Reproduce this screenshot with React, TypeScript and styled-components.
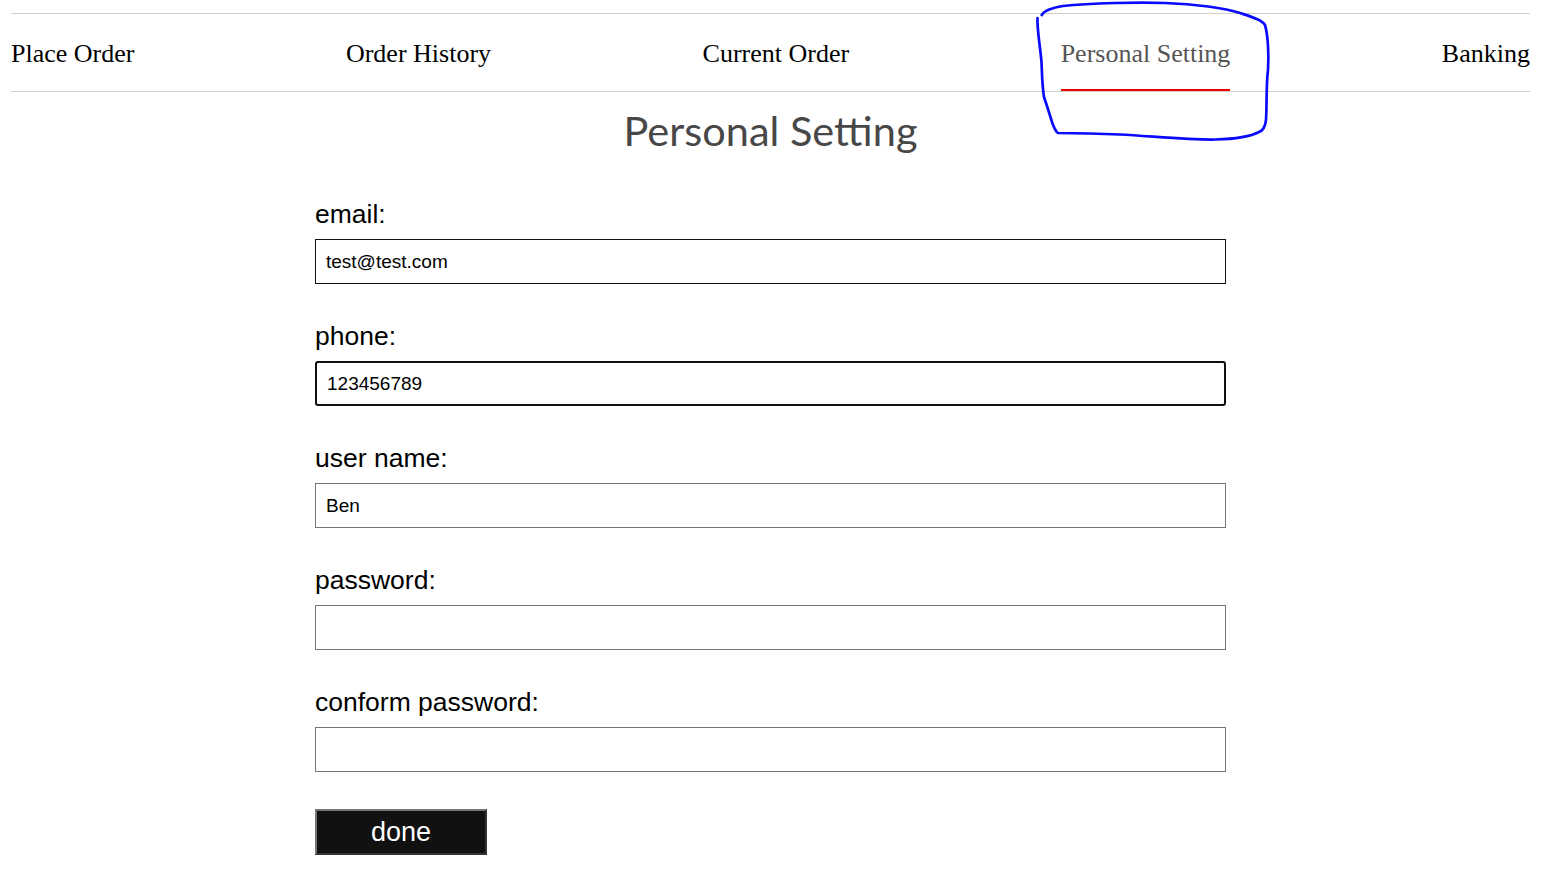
import styled, { createGlobalStyle } from "styled-components";

const GlobalStyle = createGlobalStyle`
  html, body {
    margin: 0;
    padding: 0;
    background: #fff;
  }
  body {
    font-family: "Liberation Sans", Arial, sans-serif;
  }
`;

type Tone = "dark" | "focus" | "plain";

interface Field {
  label: string;
  value: string;
  type: string;
  tone: Tone;
}

const tabs = ["Place Order", "Order History", "Current Order", "Personal Setting", "Banking"];

const fields: Field[] = [
  { label: "email:", value: "test@test.com", type: "email", tone: "dark" },
  { label: "phone:", value: "123456789", type: "tel", tone: "focus" },
  { label: "user name:", value: "Ben", type: "text", tone: "plain" },
  { label: "password:", value: "", type: "password", tone: "plain" },
  { label: "conform password:", value: "", type: "password", tone: "plain" },
];

export default function App() {
  return (
    <>
      <GlobalStyle />
      <Page>
        <Nav>
          {tabs.map((t) => (
            <NavItem key={t} href="#" $active={t === "Personal Setting"}>
              {t}
            </NavItem>
          ))}
        </Nav>

        <Title>Personal Setting</Title>

        <Form onSubmit={(e) => e.preventDefault()}>
          {fields.map((f) => (
            <FieldGroup key={f.label}>
              <Label>
                {f.label}
                <Input type={f.type} defaultValue={f.value} $tone={f.tone} />
              </Label>
            </FieldGroup>
          ))}
          <DoneButton type="submit">done</DoneButton>
        </Form>

        {/* hand-drawn highlight round the active tab */}
        <Scribble viewBox="0 0 1563 160" width="1563" height="160">
          <path
            d="M1041.7 15
               C1044 11, 1050 8, 1063 6
               C1090 3, 1140 2, 1165 3
               C1195 4, 1225 8, 1240 13
               C1252 17, 1262 20, 1265 25
               C1268 35, 1269 55, 1268 70
               C1266 85, 1267 105, 1266 120
               C1265 128, 1263 131, 1259 132
               C1250 137, 1235 139, 1215 139.5
               C1190 140, 1150 136, 1120 134.5
               C1100 133.5, 1075 133, 1058 133
               C1055 131, 1054 128, 1052 122
               C1049 112, 1047 106, 1044 97
               C1042 85, 1042 72, 1041.5 62
               C1040 45, 1037 30, 1037.5 18"
            fill="none"
            stroke="#0a0aff"
            strokeWidth="2.7"
            strokeLinecap="round"
            strokeLinejoin="round"
          />
        </Scribble>
      </Page>
    </>
  );
}

// Estilos
const Page = styled.div`
  position: relative;
  padding: 13px 33px 0 11px;
`;

const Nav = styled.nav`
  display: flex;
  justify-content: space-between;
  height: 79px;
  box-sizing: border-box;
  border-top: 1px solid #cfcfcf;
  border-bottom: 1px solid #cfcfcf;
`;

const NavItem = styled.a<{ $active?: boolean }>`
  display: block;
  height: 77px;
  box-sizing: border-box;
  padding-top: 25px;
  font-family: "Liberation Serif", "Times New Roman", serif;
  font-size: 26px;
  line-height: normal;
  color: ${(p) => (p.$active ? "#555" : "#000")};
  text-decoration: none;
  border-bottom: 2px solid ${(p) => (p.$active ? "#ee0000" : "transparent")};
`;

const Title = styled.h1`
  margin: 14px 0 44px;
  text-align: center;
  font-family: Lato, "Open Sans", sans-serif;
  font-size: 41.5px;
  font-weight: 400;
  line-height: 49px;
  color: #474747;
`;

const Form = styled.form`
  width: 911px;
  margin: 0 auto;
`;

const FieldGroup = styled.div`
  margin-bottom: 37px;
`;

const Label = styled.label`
  display: block;
  font-size: 26.5px;
  line-height: 30px;
  color: #000;
`;

const toneBorder: Record<Tone, string> = {
  dark: "1px solid #111",
  focus: "2px solid #101010",
  plain: "1px solid #767676",
};

const Input = styled.input<{ $tone: Tone }>`
  display: block;
  width: 100%;
  height: 45px;
  margin-top: 10px;
  box-sizing: border-box;
  padding: 0 10px;
  font-family: "Liberation Sans", Arial, sans-serif;
  font-size: 19px;
  color: #000;
  background: #fff;
  border: ${(p) => toneBorder[p.$tone]};
  border-radius: ${(p) => (p.$tone === "focus" ? "3px" : "0")};
  outline: none;
`;

const DoneButton = styled.button`
  display: block;
  width: 172px;
  height: 46px;
  padding: 0;
  font-family: "Liberation Sans", Arial, sans-serif;
  font-size: 27px;
  color: #fff;
  background: #111;
  border: 2px solid;
  border-color: #767676 #333 #333 #767676;
  cursor: pointer;
`;

const Scribble = styled.svg`
  position: absolute;
  top: 0;
  left: 0;
  pointer-events: none;
`;
